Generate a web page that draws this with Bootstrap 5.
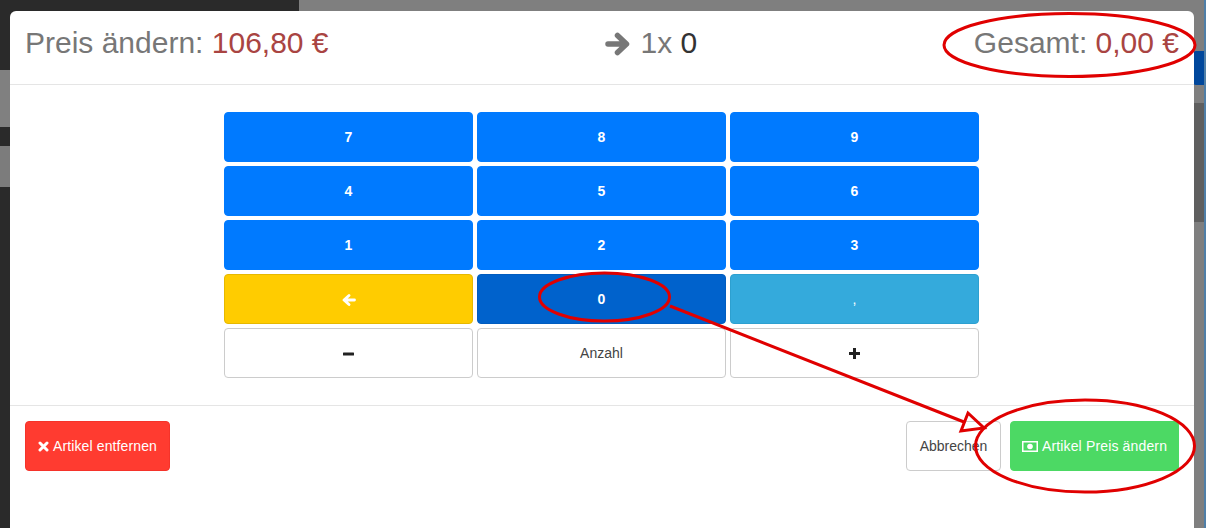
<!DOCTYPE html>
<html lang="de">
<head>
  <meta charset="UTF-8">
  <title>Preis ändern</title>
  <link href="https://cdn.jsdelivr.net/npm/bootstrap@5.3.0/dist/css/bootstrap.min.css" rel="stylesheet">
  <style>
    body { margin: 0; background: #7f7f7f; font-family: "Liberation Sans", Arial, sans-serif; font-size: 14px; color: #333; }
    .stage { position: relative; width: 1206px; height: 528px; overflow: hidden; }
    .backdrop { height: 528px; }
    .side-dark { width: 299px; background: #2a2a2a; padding-top: 70px; }
    .band-one { height: 57px; background: #808080; margin-bottom: 19px; }
    .band-two { height: 41px; background: #7c7c7c; }
    .side-light { background: #7f7f7f; padding-top: 51px; }
    .blue-tab { width: 11px; height: 34px; margin-left: auto; background: #00479c; border-radius: 3px 0 0 3px; }
    .scroll-shade { width: 10px; height: 119px; margin: 18px 0 0 auto; background: #5f5f5f; }
    .edge-line { width: 2px; background: #4f7fa8; }

    .dialog { position: absolute; left: 10px; top: 11px; width: 1184px; height: 530px; border: 0; border-radius: 6px; background: #fff; }
    .dialog .modal-header { height: 74px; padding: 12px 15px 0; align-items: flex-start; border-bottom: 1px solid #e5e5e5; border-radius: 0; }
    .head-text { font-size: 30px; line-height: 40px; color: #777; white-space: nowrap; }
    .price { color: #a94442; }
    .qty-val { color: #333; }
    .arrow-ic { width: 26px; height: 24px; vertical-align: -3px; margin-right: 1px; }

    .dialog .modal-body { flex: 0 0 auto; padding: 27px 0; }
    .numpad-wrap { width: 755px; margin-left: 214px; }
    .pad-btn { display: flex; align-items: center; justify-content: center; width: 100%; height: 50px; padding: 1px 0 0; font-size: 14px; border-radius: 4px; }
    .key-blue { background: #007aff; border: 1px solid #007aff; color: #fff; font-weight: 700; }
    .key-yellow { background: #fc0; border: 1px solid #e6b800; color: #fff; }
    .key-active { background: #0062cc; border: 1px solid #005cbf; color: #fff; font-weight: 700; }
    .key-sky { background: #34aadc; border: 1px solid #2da0d0; color: #fff; }
    .key-plain { background: #fff; border: 1px solid #ccc; color: #444; }

    .dialog .modal-footer { display: flex; justify-content: space-between; align-items: flex-start; flex-wrap: nowrap; padding: 15px 15px 0; border-top: 1px solid #e5e5e5; border-radius: 0; }
    .dialog .modal-footer > * { margin: 0; }
    .foot-gap { gap: 9px; }
    .foot-btn { display: inline-flex; align-items: center; justify-content: center; height: 50px; padding: 0; font-size: 14px; border-radius: 4px; }
    .btn-remove { width: 145px; background: #ff3b30; border: 1px solid #f5332a; color: #fff; letter-spacing: .12px; }
    .btn-cancel { width: 95px; background: #fff; border: 1px solid #ccc; color: #444; }
    .btn-confirm { width: 169px; background: #4cd964; border: 1px solid #4cd964; color: #fff; letter-spacing: .15px; }
    .foot-ic { margin-right: 4px; }

    .ink { position: absolute; left: 0; top: 0; pointer-events: none; }
  </style>
</head>
<body>
  <div class="stage">
    <!-- Seite hinter dem Dialog -->
    <div class="backdrop d-flex">
      <div class="side-dark">
        <div class="band-one"></div>
        <div class="band-two"></div>
      </div>
      <div class="side-light flex-grow-1">
        <div class="blue-tab"></div>
        <div class="scroll-shade"></div>
      </div>
      <div class="edge-line"></div>
    </div>

    <div class="modal-content dialog">
      <div class="modal-header d-flex justify-content-between">
        <div class="head-text">Preis ändern: <span class="price">106,80 €</span></div>
        <div class="head-text">
          <svg class="arrow-ic" viewBox="0 0 26 24"><path d="M3 12H21M12.500 3.500 21.500 12 12.500 20.500" fill="none" stroke="#777" stroke-width="5.500" stroke-linecap="round" stroke-linejoin="round"/></svg>
          1x <span class="qty-val">0</span>
        </div>
        <div class="head-text">Gesamt: <span class="price">0,00 €</span></div>
      </div>

      <div class="modal-body">
        <div class="numpad-wrap">
          <div class="row row-cols-3 g-1" id="pad"></div>
        </div>
      </div>

      <div class="modal-footer">
        <button class="btn foot-btn btn-remove" type="button">
          <svg class="foot-ic" width="11" height="11" viewBox="0 0 11 11"><path d="M2 2 9 9M9 2 2 9" stroke="#fff" stroke-width="3" stroke-linecap="round"/></svg>
          Artikel entfernen
        </button>
        <div class="d-flex foot-gap">
          <button class="btn foot-btn btn-cancel" type="button">Abbrechen</button>
          <button class="btn foot-btn btn-confirm" type="button">
            <svg class="foot-ic" width="16" height="11" viewBox="0 0 16 11"><path fill="#fff" fill-rule="evenodd" d="M0 0h16v11H0zM1.500 1.500v8h13v-8z"/><circle cx="8" cy="5.500" r="2.800" fill="#fff"/></svg>
            Artikel Preis ändern
          </button>
        </div>
      </div>
    </div>

    <!-- rote Markierungen -->
    <svg class="ink" width="1206" height="528" viewBox="0 0 1206 528" fill="none" stroke="#e00000" stroke-width="3">
      <ellipse cx="1069.500" cy="45" rx="125.500" ry="31.500"/>
      <ellipse cx="604.500" cy="297" rx="65" ry="24"/>
      <ellipse cx="1085" cy="446" rx="109.500" ry="46"/>
      <path d="M670 306 964 422"/>
      <path d="M968 413 984 428 961 431Z"/>
    </svg>
  </div>

  <script>
    // Tasten des Ziffernblocks
    const arrowLeft = '<svg width="14" height="12" viewBox="0 0 14 12"><path d="M12.500 6H3M7 1.500 2 6l5 4.500" fill="none" stroke="#fff" stroke-width="2.800" stroke-linecap="round" stroke-linejoin="round"/></svg>';
    const minus = '<svg width="11" height="4" viewBox="0 0 11 4"><rect width="11" height="3" y="0.500" rx="0.500" fill="#222"/></svg>';
    const plus = '<svg width="11" height="11" viewBox="0 0 11 11"><path d="M5.500 0v11M0 5.500h11" stroke="#222" stroke-width="3"/></svg>';
    const keys = [
      ['7', 'key-blue'], ['8', 'key-blue'], ['9', 'key-blue'],
      ['4', 'key-blue'], ['5', 'key-blue'], ['6', 'key-blue'],
      ['1', 'key-blue'], ['2', 'key-blue'], ['3', 'key-blue'],
      [arrowLeft, 'key-yellow'], ['0', 'key-active'], [',', 'key-sky'],
      [minus, 'key-plain'], ['Anzahl', 'key-plain'], [plus, 'key-plain']
    ];
    const pad = document.getElementById('pad');
    keys.forEach(k => {
      const col = document.createElement('div');
      col.className = 'col';
      col.innerHTML = `<button type="button" class="btn pad-btn ${k[1]}">${k[0]}</button>`;
      pad.appendChild(col);
    });
  </script>
  <script src="https://cdn.jsdelivr.net/npm/bootstrap@5.3.0/dist/js/bootstrap.bundle.min.js"></script>
</body>
</html>
